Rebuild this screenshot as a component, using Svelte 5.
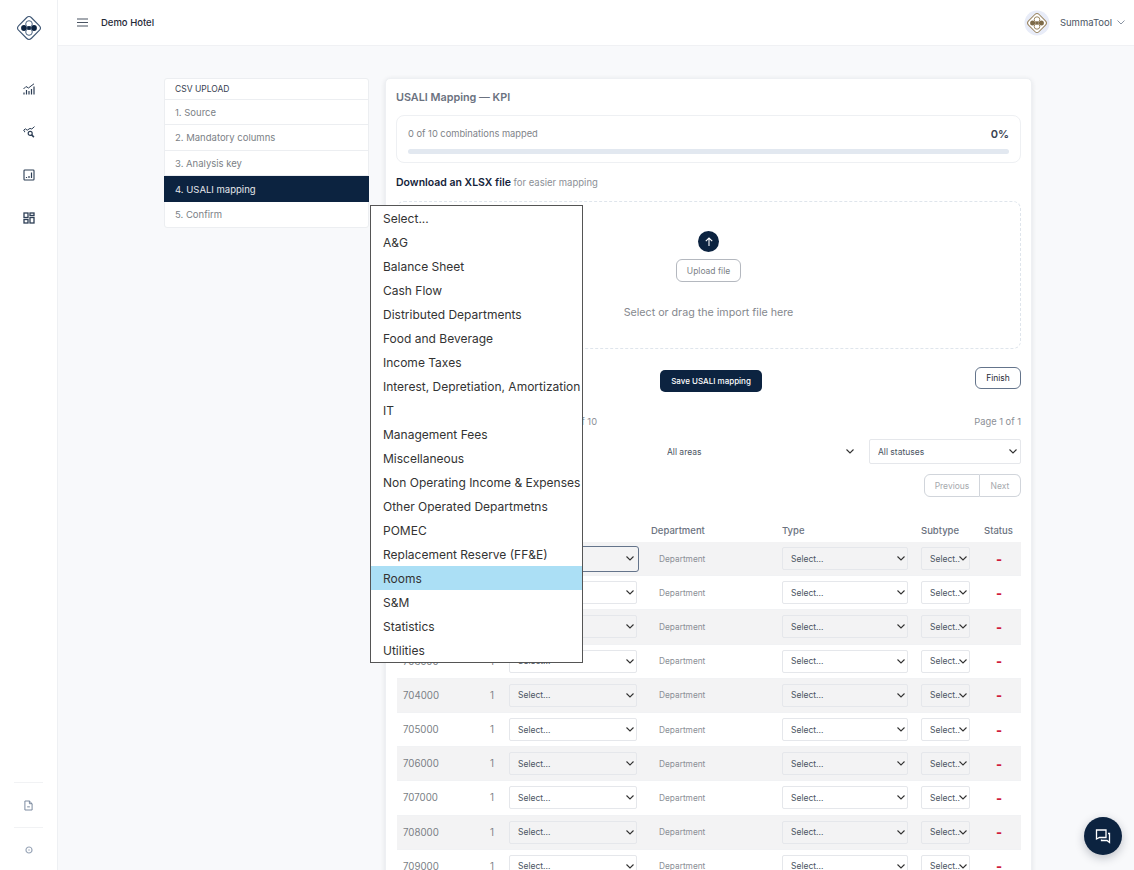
<script>
  const steps = ["1. Source", "2. Mandatory columns", "3. Analysis key", "4. USALI mapping", "5. Confirm"]
  const options = ["Select...", "A&G", "Balance Sheet", "Cash Flow", "Distributed Departments", "Food and Beverage", "Income Taxes", "Interest, Depretiation, Amortization", "IT", "Management Fees", "Miscellaneous", "Non Operating Income & Expenses", "Other Operated Departmetns", "POMEC", "Replacement Reserve (FF&E)", "Rooms", "S&M", "Statistics", "Utilities"]
  const rows = ["701000", "702000", "703000", "703500", "704000", "705000", "706000", "707000", "708000", "709000"]
</script>

<div class="layout">
  <aside class="sidebar">
    <svg class="logo" viewBox="0 0 28 28" width="28" height="28">
      <rect x="5" y="5" width="18" height="18" rx="3.5" transform="rotate(45 14 14)" fill="#fff" stroke="#3d5573" stroke-width="1.1" />
      <circle cx="9" cy="14" r="2.9" fill="#0d2340" />
      <circle cx="19" cy="14" r="2.9" fill="#0d2340" />
      <circle cx="14" cy="10" r="3.3" fill="#fff" stroke="#4a6280" stroke-width="1" />
      <circle cx="14" cy="18" r="3.3" fill="#fff" stroke="#4a6280" stroke-width="1" />
      <circle cx="14" cy="14" r="2" fill="#0d2340" />
    </svg>
    <nav class="nav">
      <svg viewBox="0 0 12 12" width="12" height="12" fill="none" stroke="#2d3e55" stroke-width="1">
        <path d="M.5 6 3 3.5 5.5 5 8 3 11 .8" />
        <path d="M1 11.5V9.5M3.5 11.5V7M6 11.5V8M8.5 11.5V6M11 11.5V3.5" stroke-width="1.2" />
      </svg>
      <svg viewBox="0 0 12 12" width="12" height="12" fill="none" stroke="#2d3e55" stroke-width="1">
        <path d="M.3 4.6 2.3 2.8 4.2 4.2 7 2.4 8.8 3 11.5 .6" />
        <path d="M1.6 4.6v1.6" />
        <circle cx="7.2" cy="7.4" r="2" stroke-width="1.2" />
        <path d="M8.7 8.9l2.2 2.2" stroke-width="1.5" />
      </svg>
      <svg viewBox="0 0 12 12" width="12" height="12" fill="none" stroke="#2d3e55" stroke-width="1">
        <rect x="1" y="1" width="10" height="10" rx=".8" stroke-width="1.1" />
        <path d="M3.5 9V8M6 9V7M8.5 9V3.5" stroke-width="1.2" />
      </svg>
      <svg viewBox="0 0 12 12" width="12" height="12" fill="none" stroke="#2d3e55" stroke-width="1.3">
        <rect x="1" y="1" width="4" height="4.5" />
        <rect x="7" y="1" width="4" height="2.5" />
        <rect x="1" y="7.5" width="4" height="3.5" />
        <rect x="7" y="5.5" width="4" height="5.5" />
      </svg>
    </nav>
    <div class="side-bottom">
      <div class="side-item">
        <svg viewBox="0 0 10 12" width="9" height="11" fill="none" stroke="#6f7f96" stroke-width="1">
          <path d="M1 1h5l3 3v7H1zM6 1v3h3" />
          <path d="M3.5 7.5h3" />
        </svg>
      </div>
      <div class="side-item">
        <svg viewBox="0 0 8 8" width="8" height="8" fill="none" stroke="#9aa6b8" stroke-width="1.2">
          <circle cx="4" cy="4" r="3" />
          <path d="M3 4h2" stroke-width=".8" />
        </svg>
      </div>
    </div>
  </aside>

  <div class="main">
    <header class="topbar">
      <svg class="burger" viewBox="0 0 11 9" width="11" height="9" stroke="#4b5563" stroke-width="1.1">
        <path d="M0 1h11M0 4.5h11M0 8h11" />
      </svg>
      <span class="hotel">Demo Hotel</span>
      <div class="user">
        <svg class="avatar" viewBox="0 0 26 26" width="26" height="26">
          <circle cx="13" cy="13" r="12.5" fill="#e8ecf8" />
          <rect x="5.5" y="5.5" width="15" height="15" rx="3" transform="rotate(45 13 13)" fill="#fff" stroke="#9a8560" />
          <circle cx="8.6" cy="13" r="2.5" fill="#7d6a48" />
          <circle cx="17.4" cy="13" r="2.5" fill="#7d6a48" />
          <circle cx="13" cy="9.6" r="2.8" fill="#fff" stroke="#9a8560" />
          <circle cx="13" cy="16.4" r="2.8" fill="#fff" stroke="#9a8560" />
          <circle cx="13" cy="13" r="1.8" fill="#7d6a48" />
        </svg>
        <span class="user-name">SummaTool</span>
        <svg viewBox="0 0 8 5" width="8" height="5" fill="none" stroke="#8a94a3"><path d="M.5.5 4 4 7.5.5" /></svg>
      </div>
    </header>

    <div class="content">
      <div class="steps">
        <div class="steps-head">CSV UPLOAD</div>
        {#each steps as step, i}
          <div class="step" class:active={i === 3}>{step}</div>
        {/each}
      </div>

      <section class="card">
        <h2>USALI Mapping — KPI</h2>

        <div class="progress-box">
          <div class="progress-top">
            <span>0 of 10 combinations mapped</span>
            <b>0%</b>
          </div>
          <div class="track"></div>
        </div>

        <p class="download"><b>Download an XLSX file</b> for easier mapping</p>

        <div class="dropzone">
          <div class="up">
            <svg viewBox="0 0 10 10" width="10" height="10" fill="none" stroke="#fff" stroke-width="1.1"><path d="M5 9V1M1.8 4.2 5 1l3.2 3.2" /></svg>
          </div>
          <button class="upload">Upload file</button>
          <p>Select or drag the import file here</p>
        </div>

        <div class="actions">
          <button class="save">Save USALI mapping</button>
          <button class="finish">Finish</button>
        </div>

        <div class="counts">
          <span class="showing">Rows to be mapped: 10 of 10</span>
          <span>Page 1 of 1</span>
        </div>

        <div class="filters">
          <input class="search" />
          <select class="areas"><option>All areas</option></select>
          <select class="statuses"><option>All statuses</option></select>
        </div>

        <div class="pager">
          <button>Previous</button>
          <button>Next</button>
        </div>

        <div class="grid head">
          <span>Account</span>
          <span>Qty</span>
          <span>KPI</span>
          <span class="head-dept">Department</span>
          <span>Type</span>
          <span>Subtype</span>
          <span>Status</span>
        </div>
        {#each rows as code, i}
          <div class="grid row" class:odd={i % 2 === 0}>
            <span class="code">{code}</span>
            <span class="qty">1</span>
            <select class:focus={i === 0}><option>Select...</option></select>
            <span class="dept">Department</span>
            <select class="type"><option>Select...</option></select>
            <select class="subtype"><option>Select...</option></select>
            <span class="dash">-</span>
          </div>
        {/each}
      </section>
    </div>
  </div>

  <div class="listbox">
    {#each options as opt}
      <div class="opt" class:hover={opt === "Rooms"}>{opt}</div>
    {/each}
  </div>

  <button class="chat" aria-label="Chat">
    <svg viewBox="0 0 16 16" width="16" height="16" fill="none" stroke="#fff" stroke-width="1.3">
      <path d="M1.5 2h9.5v7.5H4.5l-3 1.5z" />
      <path d="M13 5.5h1.5v9l-2.5-2H6.5v-1" />
    </svg>
  </button>
</div>

<style>
  :global(body) {
    margin: 0;
    font-family: Inter, "Noto Sans", sans-serif;
    color: #1f2937;
  }

  button,
  select,
  input {
    font-family: inherit;
  }

  select {
    appearance: none;
    background-image: url("data:image/svg+xml,%3Csvg xmlns='http://www.w3.org/2000/svg' width='8' height='5' fill='none' stroke='%23333' stroke-width='1.1'%3E%3Cpath d='M.5.5 4 4 7.5.5'/%3E%3C/svg%3E");
    background-repeat: no-repeat;
    background-position: right 2px center;
  }

  .layout {
    position: relative;
    display: flex;
    height: 100vh;
    overflow: hidden;
    background: #f8f9fb;
  }

  .sidebar {
    flex: 0 0 57px;
    display: flex;
    flex-direction: column;
    align-items: center;
    background: #fff;
    border-right: 1px solid #eef0f3;
  }

  .logo {
    margin-top: 14px;
  }

  .nav {
    display: flex;
    flex-direction: column;
    align-items: center;
    gap: 31px;
    margin-top: 41px;
  }

  .side-bottom {
    margin-top: auto;
    margin-bottom: -2px;
    width: 29px;
  }

  .side-item {
    display: flex;
    align-items: center;
    justify-content: center;
    height: 44px;
    border-top: 1px solid #f1f2f4;
  }

  .main {
    flex: 1;
    min-width: 0;
    display: flex;
    flex-direction: column;
  }

  .topbar {
    flex: 0 0 45px;
    display: flex;
    align-items: center;
    padding: 0 9px 0 19px;
    background: #fff;
    border-bottom: 1px solid #f0f1f4;
  }

  .hotel {
    margin-left: 13px;
    font-size: 9.5px;
    font-weight: 500;
    color: #1f2937;
  }

  .user {
    display: flex;
    align-items: center;
    margin-left: auto;
  }

  .user-name {
    margin: 0 5px 0 10px;
    font-size: 9.5px;
    color: #4b5563;
  }

  .content {
    display: flex;
    align-items: flex-start;
    gap: 16px;
    padding: 32px 102px 0 106px;
  }

  .steps {
    flex: 0 0 205px;
    background: #fff;
    border: 1px solid #eceef1;
    border-radius: 3px;
    box-sizing: border-box;
    font-size: 9.5px;
    color: #7b7f86;
  }

  .steps-head {
    height: 21px;
    line-height: 20px;
    padding-left: 10px;
    box-sizing: border-box;
    font-size: 8.5px;
    color: #374151;
    border-bottom: 1px solid #eceef1;
  }

  .step {
    height: 25.4px;
    line-height: 25.6px;
    padding-left: 10px;
    box-sizing: border-box;
    border-bottom: 1px solid #eceef1;
  }

  .step:last-child {
    border-bottom: 0;
  }

  .step.active {
    margin: 0 -1px;
    padding-left: 11px;
    line-height: 27px;
    background: #0c2340;
    color: #e5e7eb;
    border-bottom: 0;
  }

  .card {
    flex: 1;
    min-width: 0;
    height: 900px;
    box-sizing: border-box;
    padding: 11px 10px 0;
    background: #fff;
    border: 1px solid #eef0f3;
    border-radius: 5px;
    box-shadow: 0 1px 5px rgba(30, 41, 59, 0.1);
  }

  h2 {
    margin: 0 0 10px;
    font-size: 10.8px;
    line-height: 15px;
    font-weight: 600;
    color: #6b7280;
  }

  .progress-box {
    box-sizing: border-box;
    height: 48px;
    padding: 11px 11px 0;
    border: 1px solid #eef0f3;
    border-radius: 8px;
  }

  .progress-top {
    display: flex;
    justify-content: space-between;
    align-items: center;
    height: 13px;
    font-size: 9.3px;
    color: #808389;
  }

  .progress-top b {
    font-size: 11px;
    font-weight: 600;
    color: #374151;
  }

  .track {
    height: 5px;
    margin-top: 9px;
    border-radius: 3px;
    background: #e2e8f0;
  }

  .download {
    margin: 13px 0 11px;
    line-height: 14px;
    font-size: 9.5px;
    color: #8b8f96;
  }

  .download b {
    font-size: 10.5px;
    font-weight: 600;
    color: #14233a;
  }

  .dropzone {
    box-sizing: border-box;
    height: 148px;
    display: flex;
    flex-direction: column;
    align-items: center;
    padding-top: 29px;
    border: 1px dashed #dfe5ec;
    border-radius: 8px;
  }

  .up {
    display: flex;
    align-items: center;
    justify-content: center;
    width: 21px;
    height: 21px;
    border-radius: 50%;
    background: #0c2340;
  }

  .upload {
    width: 65px;
    height: 23px;
    margin-top: 7px;
    padding: 0;
    background: #fff;
    border: 1px solid #b4b8bf;
    border-radius: 6px;
    font-size: 8.5px;
    color: #7b7f86;
  }

  .dropzone p {
    margin: 24px 0 0;
    font-size: 10.7px;
    line-height: 14px;
    color: #85888e;
  }

  .actions {
    display: flex;
    align-items: flex-start;
    height: 25px;
    margin-top: 18px;
  }

  .save {
    height: 22px;
    width: 102px;
    margin: 3px 0 0 264px;
    padding: 0;
    background: #0c2340;
    border: 0;
    border-radius: 5px;
    color: #fff;
    font-size: 8px;
    font-weight: 500;
  }

  .finish {
    width: 46px;
    height: 22px;
    margin-left: auto;
    padding: 0;
    background: #fff;
    border: 1px solid #64748b;
    border-radius: 6px;
    font-size: 8.5px;
    color: #1f2937;
  }

  .counts {
    display: flex;
    justify-content: space-between;
    align-items: center;
    height: 13px;
    margin-top: 23px;
    font-size: 9.3px;
    color: #8b8f96;
  }

  .showing {
    width: 201px;
    text-align: right;
    white-space: nowrap;
  }

  .filters {
    display: flex;
    align-items: center;
    gap: 6px;
    height: 25px;
    margin-top: 11px;
  }

  .search {
    width: 254px;
    box-sizing: border-box;
    height: 25px;
    border: 0;
    background: transparent;
  }

  .filters select {
    height: 25px;
    font-size: 8.5px;
    color: #4b5563;
    background-color: #fff;
  }

  .areas {
    flex: 1;
    min-width: 0;
    border: 0;
    padding-left: 11px;
    background-position: right 9px center;
  }

  .statuses {
    flex: 0 0 152px;
    border: 1px solid #e5e7eb;
    border-radius: 2px;
    padding-left: 8px;
    background-position: right 3px center;
  }

  .pager {
    display: flex;
    justify-content: flex-end;
    margin-top: 10px;
  }

  .pager button {
    height: 23px;
    padding: 0;
    background: #fff;
    border: 1px solid #d1d5db;
    font-size: 8.5px;
    color: #a6a9ae;
  }

  .pager button:first-child {
    width: 56px;
    border-radius: 6px 0 0 6px;
  }

  .pager button:last-child {
    width: 41px;
    border-left: 0;
    border-radius: 0 6px 6px 0;
  }

  .grid {
    display: grid;
    grid-template-columns: 89px 23px 128px 145px 139px 63px 1fr;
    align-items: center;
    margin-left: 1px;
  }

  .head {
    box-sizing: border-box;
    height: 34px;
    margin-top: 11px;
    padding-bottom: 5px;
    align-items: end;
    font-size: 9.5px;
    font-weight: 500;
    line-height: 12px;
    color: #6b7280;
  }

  .head-dept {
    padding-left: 14px;
  }

  .row {
    height: 34.2px;
    border-bottom: 1px solid #f1f2f4;
    box-sizing: border-box;
    font-size: 9.7px;
    color: #7b7f86;
  }

  .row.odd {
    background: #f3f3f4;
  }

  .code {
    padding-left: 6px;
  }

  .qty {
    padding-left: 4px;
  }

  .row select {
    height: 23px;
    width: 100%;
    box-sizing: border-box;
    padding: 0 9px 0 8px;
    background-color: #fff;
    border: 1px solid #e5e7eb;
    border-radius: 2px;
    font-size: 8.5px;
    color: #4b5563;
  }

  .row.odd select {
    background-color: #f3f3f4;
  }

  .row select.focus {
    height: 26px;
    width: 130px;
    border: 1px solid #64748b;
    border-radius: 3px;
    background-position: right 4px center;
  }

  .row select.type {
    width: 126px;
  }

  .row select.subtype {
    width: 49px;
  }

  .dept {
    padding-left: 22px;
    font-size: 8.3px;
    color: #8b8f96;
  }

  .dash {
    padding-left: 12px;
    font-weight: 800;
    font-size: 13px;
    color: #d01c3c;
  }

  .listbox {
    position: absolute;
    left: 370px;
    top: 205px;
    width: 211px;
    background: #fff;
    border: 1px solid #555;
    font-size: 12px;
    color: #333;
  }

  .opt {
    height: 24px;
    line-height: 26px;
    padding-left: 12px;
    white-space: nowrap;
  }

  .opt.hover {
    background: #abdff5;
  }

  .chat {
    position: absolute;
    right: 12px;
    bottom: 15px;
    display: flex;
    align-items: center;
    justify-content: center;
    width: 38px;
    height: 38px;
    padding: 0;
    background: #0c2340;
    border: 0;
    border-radius: 50%;
    box-shadow: 0 3px 10px rgba(15, 23, 42, 0.25);
  }
</style>
